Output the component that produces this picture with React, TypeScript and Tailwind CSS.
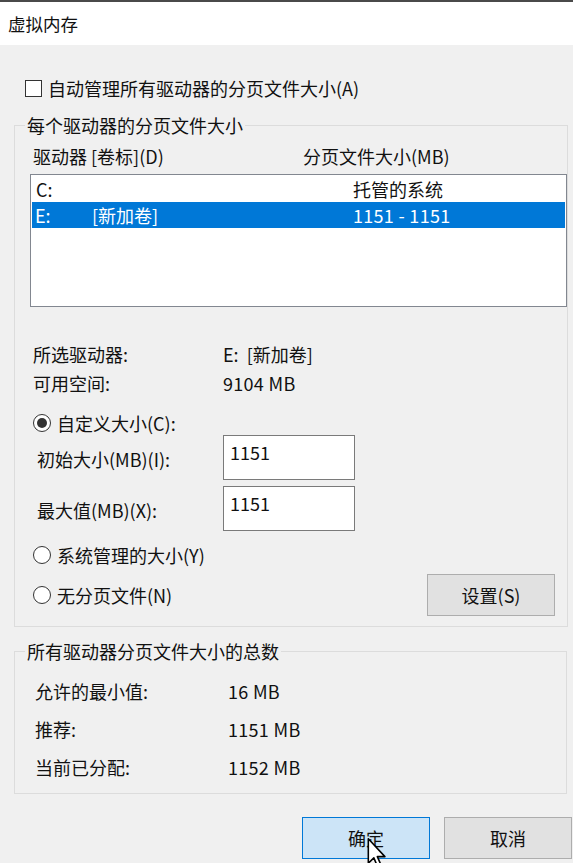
import React from "react";

const font = "font-['Noto_Sans_CJK_SC','Noto_Sans',sans-serif]";

function Radio({ checked }: { checked?: boolean }) {
  return (
    <span className="flex h-[18px] w-[18px] shrink-0 items-center justify-center rounded-full border border-[#333] bg-white">
      {checked && <span className="h-[10px] w-[10px] rounded-full bg-[#333]" />}
    </span>
  );
}

function Cursor() {
  return (
    <svg className="absolute left-[367px] top-[838px]" width="20" height="30" viewBox="0 0 12 19">
      <path
        d="M0.5 0.5 L0.5 16 L4 12.6 L6.4 18.2 L8.6 17.2 L6.2 11.8 L11 11.8 Z"
        fill="#fff"
        stroke="#000"
        strokeWidth="1"
        strokeLinejoin="round"
      />
    </svg>
  );
}

const totals = [
  { label: "允许的最小值:", value: "16 MB" },
  { label: "推荐:", value: "1151 MB" },
  { label: "当前已分配:", value: "1152 MB" },
];

export default function App() {
  return (
    <div className={`relative h-[863px] w-[573px] overflow-hidden bg-[#f0f0f0] text-[18px] leading-[24px] text-[#111] ${font}`}>
      {/* title bar */}
      <div className="flex h-[45px] items-center border-t-2 border-[#4a4a4a] bg-white px-[8px] text-[17.5px]">
        虚拟内存
      </div>

      <div className="pl-[14px]">
        {/* auto manage */}
        <div className="mt-[31px] flex h-[24px] items-center gap-[6px] pl-[11px]">
          <span className="h-[17px] w-[17px] shrink-0 border border-[#333] bg-white" />
          <span>自动管理所有驱动器的分页文件大小(A)</span>
        </div>

        {/* per-drive group */}
        <fieldset className="mt-[13px] w-[553px] border border-[#dcdcdc] pb-[10px]">
          <legend className="ml-[10px] px-[2px] leading-[24px]">每个驱动器的分页文件大小</legend>

          <div className="mt-[7px] flex h-[24px] items-center pl-[18px]">
            <span className="w-[270px]">驱动器 [卷标](D)</span>
            <span>分页文件大小(MB)</span>
          </div>

          <div className="ml-[15px] mt-[6px] h-[133px] w-[537px] border border-[#828790] bg-white pt-[1px]">
            <div className="ml-[1px] mr-[1px] flex h-[26px] items-center pl-[4px]">
              <span className="w-[317px]">C:</span>
              <span>托管的系统</span>
            </div>
            <div className="ml-[1px] mr-[1px] flex h-[26px] items-center bg-[#0078d7] pl-[3px] text-white">
              <span className="w-[57px]">E:</span>
              <span className="w-[261px]">[新加卷]</span>
              <span className="tracking-[0.3px]">1151&nbsp;-&nbsp;1151</span>
            </div>
          </div>

          <div className="ml-[18px] mt-[32px]">
            <div className="flex h-[29px] items-center">
              <span className="w-[190px]">所选驱动器:</span>
              <span>E:&nbsp;&nbsp;[新加卷]</span>
            </div>
            <div className="flex h-[29px] items-center">
              <span className="w-[190px]">可用空间:</span>
              <span className="tracking-[0.3px]">9104 MB</span>
            </div>
          </div>

          <div className="ml-[18px] mt-[14px] flex h-[24px] items-center gap-[6px]">
            <Radio checked />
            <span>自定义大小(C):</span>
          </div>

          <div className="ml-[22px] mt-0 flex h-[45px] items-center">
            <span className="w-[186px] pt-[3px]">初始大小(MB)(I):</span>
            <div className="h-[45px] w-[132px] border border-[#7a7a7a] bg-white pl-[6px] pt-[4px]">1151</div>
          </div>
          <div className="ml-[22px] mt-[6px] flex h-[45px] items-center">
            <span className="w-[186px] pt-[3px]">最大值(MB)(X):</span>
            <div className="h-[45px] w-[132px] border border-[#7a7a7a] bg-white pl-[6px] pt-[4px]">1151</div>
          </div>

          <div className="ml-[18px] mt-[12px] flex h-[24px] items-center gap-[6px]">
            <Radio />
            <span>系统管理的大小(Y)</span>
          </div>

          <div className="ml-[18px] mt-[7px] flex h-[42px] items-center">
            <div className="flex items-center gap-[6px]">
              <Radio />
              <span>无分页文件(N)</span>
            </div>
            <button className="ml-auto mr-[12px] h-[42px] w-[128px] border border-[#adadad] bg-[#e1e1e1]">
              设置(S)
            </button>
          </div>
        </fieldset>

        {/* totals group */}
        <fieldset className="mt-[12px] w-[553px] border border-[#dcdcdc] pb-[7px]">
          <legend className="ml-[10px] px-[2px] leading-[24px]">所有驱动器分页文件大小的总数</legend>
          <div className="ml-[20px] mt-[9px]">
            {totals.map((t) => (
              <div key={t.label} className="flex h-[38px] items-center">
                <span className="w-[193px]">{t.label}</span>
                <span className="tracking-[0.3px]">{t.value}</span>
              </div>
            ))}
          </div>
        </fieldset>

        {/* buttons */}
        <div className="ml-[288px] mt-[23px] flex gap-[14px]">
          <button className="h-[42px] w-[128px] shrink-0 border border-[#0078d7] bg-[#cce4f7]">确定</button>
          <button className="h-[42px] w-[128px] shrink-0 border border-[#adadad] bg-[#e1e1e1]">取消</button>
        </div>
      </div>

      <Cursor />
    </div>
  );
}
